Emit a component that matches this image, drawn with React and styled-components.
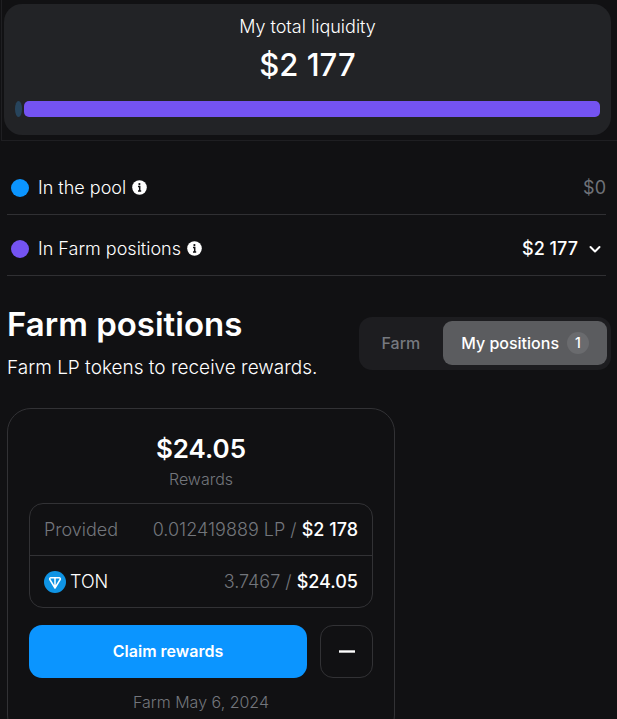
import React, { useState } from 'react';
import styled, { createGlobalStyle } from 'styled-components';

const GlobalStyle = createGlobalStyle`
  * {
    box-sizing: border-box;
  }

  html {
    scrollbar-width: none;
  }

  body {
    margin: 0;
    background: #111113;
    color: #fff;
    font-family: Inter, 'Liberation Sans', sans-serif;
    font-size: 18px;
    font-weight: 350;
    line-height: 24px;
  }

  button {
    font: inherit;
    color: inherit;
    cursor: pointer;
  }

  h1, h2, p, dl, dd {
    margin: 0;
  }
`;

const Summary = styled.section`
  margin-left: 1px;
  padding: 4px 6px 5px 2px;
  border-left: 1px solid #1f1f22;
  border-bottom: 1px solid #1f1f22;
`;

const SummaryCard = styled.div`
  padding: 11px 11px 18px;
  border-radius: 18px;
  background: #222326;
  text-align: center;
`;

const Total = styled.p`
  margin-top: 6px;
  font-size: 31px;
  line-height: 40px;
  font-weight: 500;
`;

const Bar = styled.div`
  display: flex;
  gap: 2px;
  margin-top: 16px;
`;

const BarPart = styled.span`
  flex: ${({ $fill }) => ($fill ? '1' : '0 0 7px')};
  height: 16px;
  border-radius: ${({ $fill }) => ($fill ? '5px' : '50%')};
  background: ${({ $color }) => $color};
`;

const Breakdown = styled.section`
  padding: 13px 11px 0 7px;
`;

const BreakdownRow = styled.div`
  display: flex;
  align-items: center;
  justify-content: space-between;
  height: 61px;
  padding-top: 7px;
  border-bottom: 1px solid #303033;
`;

const RowLabel = styled.div`
  display: flex;
  align-items: center;
  padding-left: 4px;
`;

const Dot = styled.span`
  width: 18px;
  height: 18px;
  margin-right: 9px;
  border-radius: 50%;
  background: ${({ $color }) => $color};
`;

const InfoButton = styled.button`
  display: flex;
  margin-left: 6px;
  padding: 0;
  border: 0;
  background: none;
`;

const Zero = styled.span`
  color: #6f7278;
  font-weight: 400;
`;

const Expand = styled.button`
  display: flex;
  align-items: center;
  gap: 11px;
  padding: 0 5px 0 0;
  border: 0;
  background: none;
  font-weight: 500;
`;

const FarmHeader = styled.header`
  display: flex;
  align-items: flex-end;
  justify-content: space-between;
  gap: 16px;
  padding: 27px 6px 0 7px;
`;

const Title = styled.h1`
  font-size: 33px;
  line-height: 42px;
  font-weight: 600;
`;

const Subtitle = styled.p`
  margin-top: 11px;
  font-size: 19px;
  font-weight: 300;
`;

const Tabs = styled.div`
  display: flex;
  flex-shrink: 0;
  margin-bottom: 10px;
  padding: 4px 4px 5px;
  border-radius: 13px;
  background: #1d1d20;
`;

const Tab = styled.button`
  display: flex;
  align-items: center;
  gap: 8px;
  height: 44px;
  padding: 0 ${({ $active }) => ($active ? '18px' : '23px 0 18px')};
  border: 0;
  border-radius: 9px;
  background: ${({ $active }) => ($active ? '#5b5c5f' : 'transparent')};
  color: ${({ $active }) => ($active ? '#fff' : '#76797f')};
  font-size: 16px;
  font-weight: 500;
`;

const Count = styled.span`
  width: 22px;
  border-radius: 11px;
  background: #6a6b6e;
  font-size: 14px;
  line-height: 22px;
`;

const PositionCard = styled.article`
  max-width: 388px;
  margin: 28px 7px 24px;
  padding: 24px 21px;
  border: 1px solid #323235;
  border-radius: 24px;
  text-align: center;
`;

const Amount = styled.h2`
  font-size: 26px;
  line-height: 32px;
  font-weight: 600;
`;

const Muted = styled.p`
  margin-top: ${({ $top }) => $top};
  color: #73767c;
  font-size: 16px;
  font-weight: 300;
`;

const Details = styled.dl`
  margin-top: 12px;
  border: 1px solid #323235;
  border-radius: 14px;
`;

const DetailRow = styled.div`
  display: flex;
  align-items: center;
  justify-content: space-between;
  height: 51px;
  padding: 0 14px;
  color: #73767c;

  & + & {
    height: 52px;
    border-top: 1px solid #323235;
  }
`;

const Token = styled.dt`
  display: flex;
  align-items: center;
  gap: 4px;
  color: #fff;
`;

const Value = styled.dd`
  white-space: nowrap;

  strong {
    color: #fff;
    font-weight: 500;
  }
`;

const Actions = styled.div`
  display: flex;
  gap: 13px;
  margin-top: 17px;
`;

const ClaimButton = styled.button`
  flex: 1;
  height: 53px;
  padding: 0 6px 2px;
  border: 0;
  border-radius: 13px;
  background: #0b95ff;
  font-size: 16px;
  font-weight: 600;
`;

const RemoveButton = styled.button`
  display: flex;
  align-items: center;
  justify-content: center;
  width: 53px;
  padding: 0;
  border: 1px solid #323235;
  border-radius: 13px;
  background: transparent;
`;

const InfoIcon = () => (
  <svg width="15" height="15" viewBox="0 0 15 15" aria-hidden="true">
    <circle cx="7.5" cy="7.5" r="7.3" fill="#fff" />
    <path d="M6 6.6h1.7v4.2M6 11h3.2" fill="none" stroke="#111113" strokeWidth="1.5" />
    <circle cx="7.4" cy="4.1" r="1.1" fill="#111113" />
  </svg>
);

const ChevronIcon = () => (
  <svg width="12" height="8" viewBox="0 0 12 8" fill="none" aria-hidden="true">
    <path d="M1.5 2 6 6.5 10.5 2" stroke="#fff" strokeWidth="2" strokeLinecap="round" strokeLinejoin="round" />
  </svg>
);

const TonIcon = () => (
  <svg width="22" height="22" viewBox="0 0 22 22" aria-hidden="true">
    <circle cx="11" cy="11" r="11" fill="#0f94e4" />
    <path
      d="M6.8 6.8h8.4c.9 0 1.4.9 1 1.7L11 17 5.8 8.5c-.4-.8.1-1.7 1-1.7ZM11 6.8V17"
      fill="none"
      stroke="#fff"
      strokeWidth="1.5"
      strokeLinejoin="round"
    />
  </svg>
);

const MinusIcon = () => (
  <svg width="16" height="3" viewBox="0 0 16 3" aria-hidden="true">
    <path d="M0 1.5h16" stroke="#fff" strokeWidth="2.4" />
  </svg>
);

const App = () => {
  const [activeTab, setActiveTab] = useState('positions');

  return (
    <>
      <GlobalStyle />
      <Summary>
        <SummaryCard>
          <p>My total liquidity</p>
          <Total>$2 177</Total>
          <Bar>
            <BarPart $color="#27445c" />
            <BarPart $fill $color="#7453f2" />
          </Bar>
        </SummaryCard>
      </Summary>

      <Breakdown>
        <BreakdownRow>
          <RowLabel>
            <Dot $color="#0b95ff" />
            In the pool
            <InfoButton aria-label="About the pool">
              <InfoIcon />
            </InfoButton>
          </RowLabel>
          <Zero>$0</Zero>
        </BreakdownRow>
        <BreakdownRow>
          <RowLabel>
            <Dot $color="#7453f2" />
            In Farm positions
            <InfoButton aria-label="About farm positions">
              <InfoIcon />
            </InfoButton>
          </RowLabel>
          <Expand>
            $2 177
            <ChevronIcon />
          </Expand>
        </BreakdownRow>
      </Breakdown>

      <FarmHeader>
        <div>
          <Title>Farm positions</Title>
          <Subtitle>Farm LP tokens to receive rewards.</Subtitle>
        </div>
        <Tabs role="tablist">
          <Tab
            role="tab"
            aria-selected={activeTab === 'farm'}
            $active={activeTab === 'farm'}
            onClick={() => setActiveTab('farm')}
          >
            Farm
          </Tab>
          <Tab
            role="tab"
            aria-selected={activeTab === 'positions'}
            $active={activeTab === 'positions'}
            onClick={() => setActiveTab('positions')}
          >
            My positions
            <Count>1</Count>
          </Tab>
        </Tabs>
      </FarmHeader>

      <PositionCard>
        <Amount>$24.05</Amount>
        <Muted $top="2px">Rewards</Muted>
        <Details>
          <DetailRow>
            <dt>Provided</dt>
            <Value>
              0.012419889 LP / <strong>$2 178</strong>
            </Value>
          </DetailRow>
          <DetailRow>
            <Token>
              <TonIcon />
              TON
            </Token>
            <Value>
              3.7467 / <strong>$24.05</strong>
            </Value>
          </DetailRow>
        </Details>
        <Actions>
          <ClaimButton>Claim rewards</ClaimButton>
          <RemoveButton aria-label="Remove position">
            <MinusIcon />
          </RemoveButton>
        </Actions>
        <Muted $top="12px">Farm May 6, 2024</Muted>
      </PositionCard>
    </>
  );
};

export default App;
